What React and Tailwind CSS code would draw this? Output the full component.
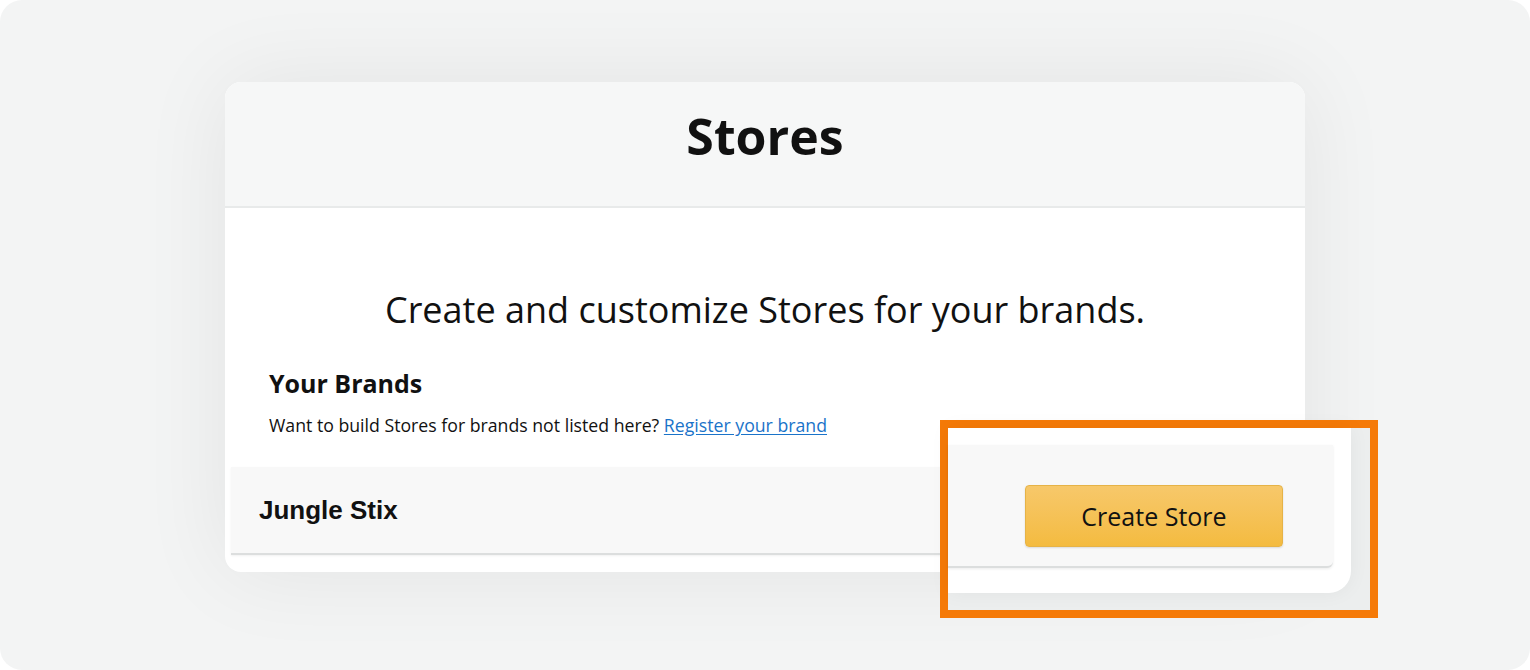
export default function App() {
  const font = { fontFamily: '"Open Sans", "Noto Sans", sans-serif' };
  return (
    <div className="w-[1530px] h-[670px] bg-white">
      <div className="relative w-full h-full rounded-[22px] bg-[#f3f4f4] flex justify-center pt-[82px]" style={font}>
        <div className="w-[1080px] h-[490px] rounded-[16px] bg-white overflow-hidden shadow-[0_0_90px_rgba(0,0,0,0.07)] flex flex-col">
          <div className="h-[126px] bg-[#f6f7f7] border-b-2 border-[#e8eaea] flex items-center justify-center pb-[16px]">
            <h1 className="text-[50px] font-bold text-[#111] leading-none">Stores</h1>
          </div>
          <div className="flex flex-col pt-[82px]">
            <p className="text-center text-[36px] text-[#111] leading-[40px]">Create and customize Stores for your brands.</p>
            <h2 className="mt-[38px] ml-[44px] text-[25px] font-bold text-[#111] leading-[30px]">Your Brands</h2>
            <p className="mt-[15px] ml-[44px] text-[17.7px] text-[#111] leading-[24px]">
              Want to build Stores for brands not listed here?{' '}
              <a className="text-[#1a73c9] underline underline-offset-2">Register your brand</a>
            </p>
            <div className="mt-[30px] mx-[6px] h-[88px] bg-[#f8f8f8] border-b-2 border-[#dcdede] shadow-[0_1px_2px_rgba(0,0,0,0.06)] flex items-center pl-[28px]">
              <span className="text-[26px] font-bold text-[#111]" style={{ fontFamily: '"Liberation Sans", Arial, sans-serif' }}>Jungle Stix</span>
            </div>
          </div>
        </div>
        <div className="absolute left-[940px] top-[420px] w-[438px] h-[198px] border-[8px] border-[#f57a08] bg-[#eceeee]">
          <div className="w-[403px] h-[165px] bg-white rounded-br-[22px] shadow-[0_0_20px_rgba(0,0,0,0.05)] pt-[17px]">
            <div className="w-[385px] h-[123px] bg-[#f8f8f8] border-b-2 border-[#dcdede] rounded-br-[6px] shadow-[0_1px_3px_rgba(0,0,0,0.08)] flex items-start pt-[40px] pl-[77px]">
              <button className="w-[258px] h-[62px] rounded-[4px] bg-gradient-to-b from-[#f7c86a] to-[#f4bb3f] border border-[#e6b347] shadow-[0_1px_2px_rgba(0,0,0,0.12)] text-[25px] text-[#111] leading-none">
                Create Store
              </button>
            </div>
          </div>
        </div>
      </div>
    </div>
  );
}
